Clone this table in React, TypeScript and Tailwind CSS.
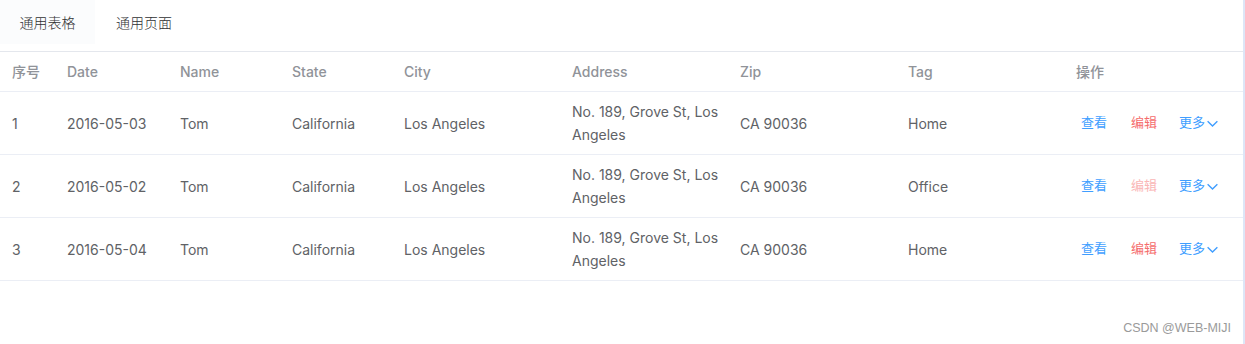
import React from "react";

const cols = "grid grid-cols-[55px_113px_112px_112px_168px_168px_168px_168px_1fr]";

const rows = [
  { id: 1, date: "2016-05-03", tag: "Home", disabled: false },
  { id: 2, date: "2016-05-02", tag: "Office", disabled: true },
  { id: 3, date: "2016-05-04", tag: "Home", disabled: false },
];

function Cell({ children }: { children?: React.ReactNode }) {
  return <div className="px-3 py-2 leading-[23px] flex items-center">{children}</div>;
}

export default function App() {
  return (
    <div className="flex w-[1245px] h-[344px] bg-white text-[14px]" style={{ fontFamily: "Inter, 'Noto Sans CJK SC', sans-serif" }}>
      <div className="w-[1243px] flex flex-col relative">
        <div className="h-[52px] border-b border-[#e4e7ed]">
          <div className="flex h-[44px] text-[#303133] font-light">
            <div className="w-[95px] bg-[#fbfcfd] flex items-center justify-center">通用表格</div>
            <div className="w-[98px] flex items-center justify-center">通用页面</div>
          </div>
        </div>
        <div className={`${cols} border-b border-[#ebeef5] text-[#909399] font-medium`}>
          {["序号", "Date", "Name", "State", "City", "Address", "Zip", "Tag", "操作"].map((h) => (
            <Cell key={h}>{h}</Cell>
          ))}
        </div>
        {rows.map((r) => (
          <div key={r.id} className={`${cols} border-b border-[#ebeef5] text-[#606266]`}>
            <Cell>{r.id}</Cell>
            <Cell>{r.date}</Cell>
            <Cell>Tom</Cell>
            <Cell>California</Cell>
            <Cell>Los Angeles</Cell>
            <Cell>
              <span className="whitespace-nowrap">
                No. 189, Grove St, Los
                <br />
                Angeles
              </span>
            </Cell>
            <Cell>CA 90036</Cell>
            <Cell>{r.tag}</Cell>
            <div className="flex items-center pl-[17px] text-[13px]">
              <span className="text-[#409eff]">查看</span>
              <span className={`ml-[24px] ${r.disabled ? "text-[#fab6b6]" : "text-[#f56c6c]"}`}>编辑</span>
              <span className="ml-[22px] text-[#409eff] flex items-center">
                更多
                <svg width="13" height="13" viewBox="0 0 12 12" className="ml-[1px]">
                  <path d="M1.5 4 L6 8.3 L10.5 4" fill="none" stroke="#409eff" strokeWidth="1.3" />
                </svg>
              </span>
            </div>
          </div>
        ))}
        <div className="absolute right-[12px] bottom-[6px] text-[12.5px] text-[#9a9a9a]" style={{ fontFamily: "'Liberation Sans', Arial, sans-serif" }}>
          CSDN @WEB-MIJI
        </div>
      </div>
      <div className="w-[2px] bg-[#dde6f7]" />
    </div>
  );
}
